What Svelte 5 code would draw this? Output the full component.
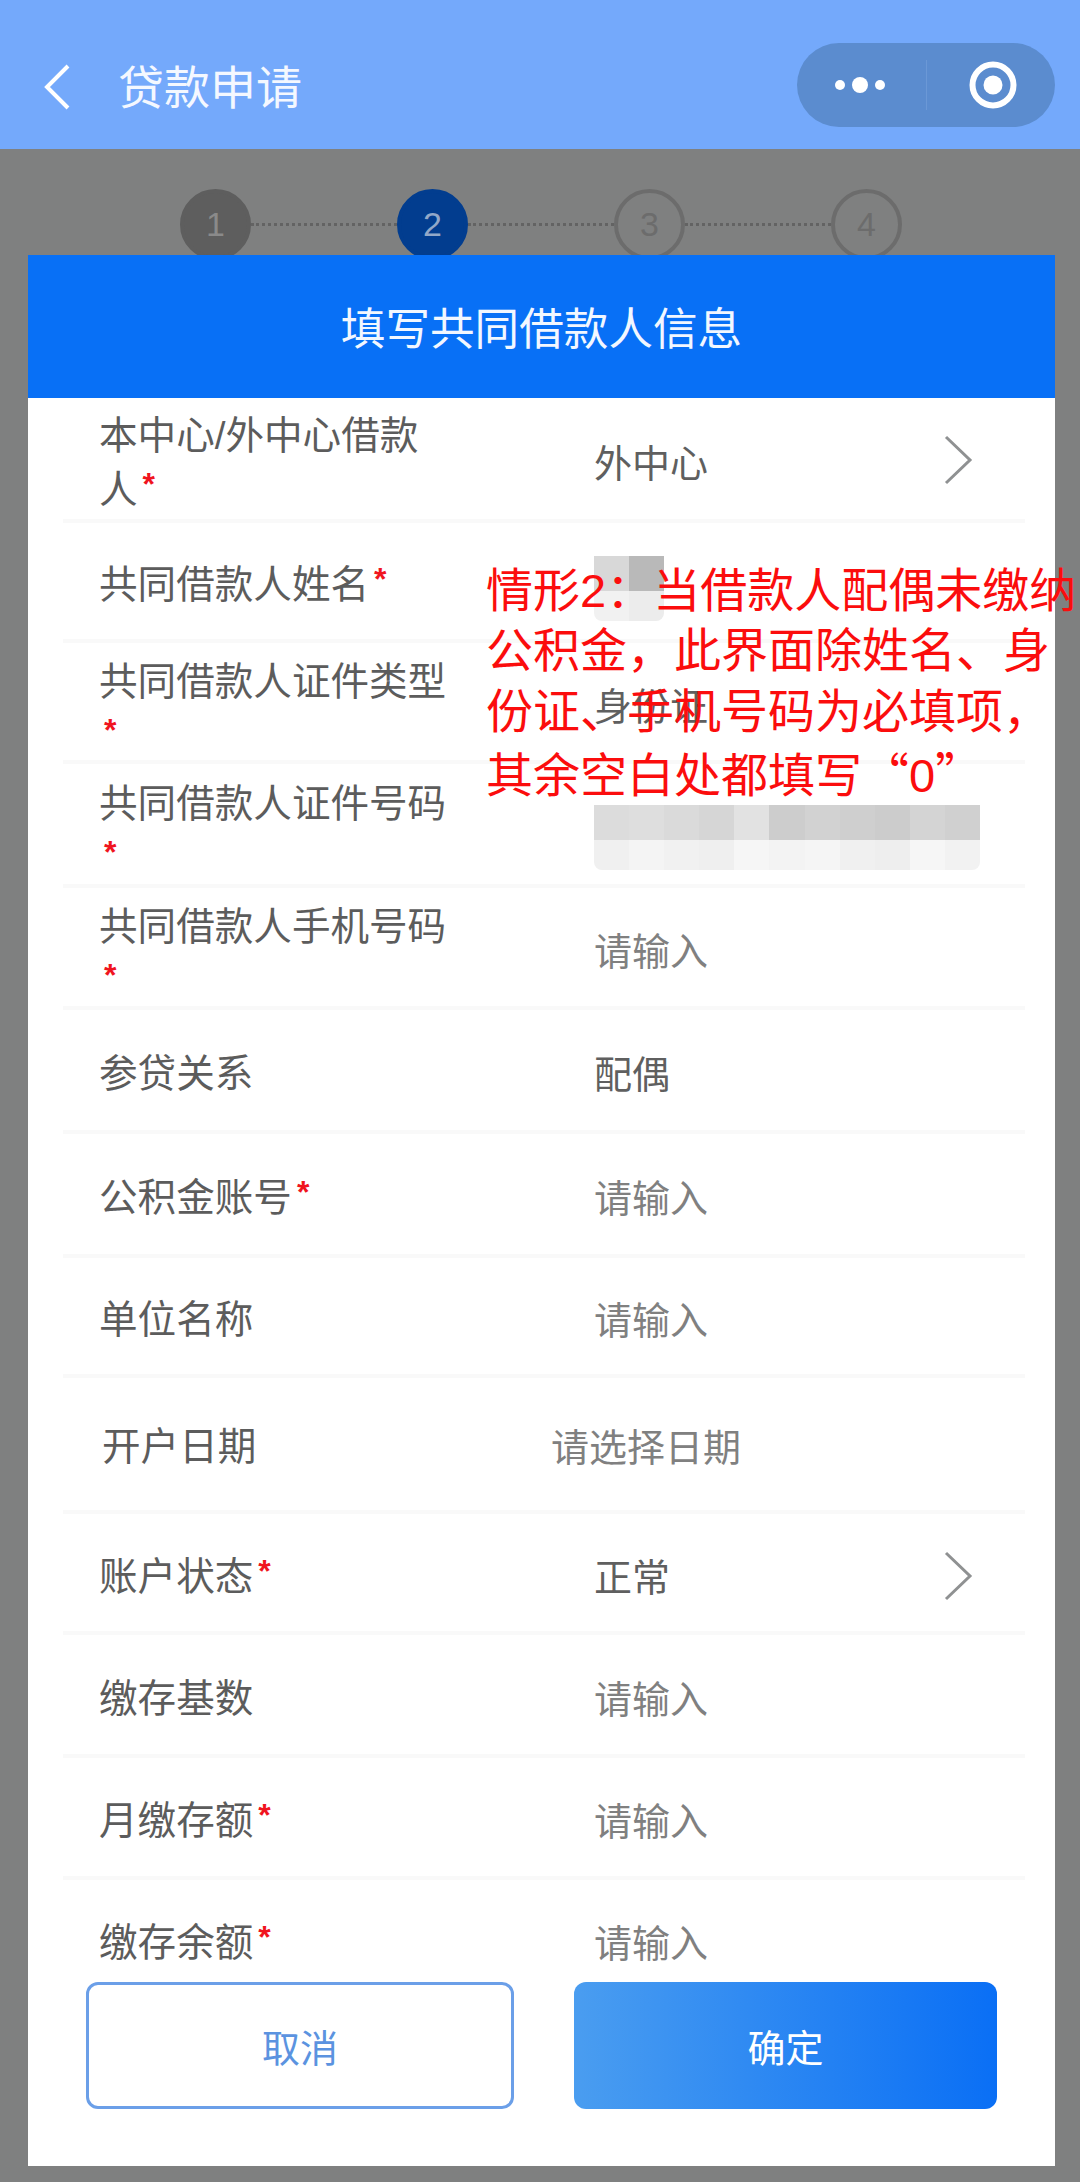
<script>
	const rows = [
		{ label: '本中心/外中心借款人', req: true, value: '外中心', arrow: true, h: 125 },
		{ label: '共同借款人姓名', req: true, value: '', mosaic: 'name', h: 120 },
		{ label: '共同借款人证件类型', req: true, value: '身份证', low: true, h: 121 },
		{ label: '共同借款人证件号码', req: true, value: '', mosaic: 'id', low: true, h: 124 },
		{ label: '共同借款人手机号码', req: true, hint: '请输入', low: true, h: 122 },
		{ label: '参贷关系', value: '配偶', h: 124 },
		{ label: '公积金账号', req: true, hint: '请输入', h: 124 },
		{ label: '单位名称', hint: '请输入', h: 120 },
		{ label: '开户日期', hint: '请选择日期', date: true, h: 136 },
		{ label: '账户状态', req: true, value: '正常', arrow: true, h: 121 },
		{ label: '缴存基数', hint: '请输入', h: 123 },
		{ label: '月缴存额', req: true, hint: '请输入', h: 122 },
		{ label: '缴存余额', req: true, hint: '请输入', h: 122 }
	];

	const steps = [1, 2, 3, 4];

	const mosaics = {
		name: {
			top: ['#d8d8d8', '#b9b9b9'],
			bottom: ['#f1f1f1', '#ececec']
		},
		id: {
			top: ['#dcdcdc', '#dedede', '#dadada', '#d6d6d6', '#e2e2e2', '#cdcdcd', '#d2d2d2', '#cfcfcf', '#cccccc', '#d4d4d4', '#d0d0d0'],
			bottom: ['#f0f0f0', '#f4f4f4', '#f1f1f1', '#efefef', '#f6f6f6', '#f3f3f3', '#f5f5f5', '#f0f0f0', '#eeeeee', '#f6f6f6', '#f2f2f2']
		}
	};
</script>

<div class="page">
	<header class="nav">
		<svg class="back" width="28" height="48" viewBox="0 0 28 48">
			<path d="M25 3 L4 24 L25 45" fill="none" stroke="#fff" stroke-width="4" />
		</svg>
		<span class="nav-title">贷款申请</span>
		<div class="capsule">
			<div class="dots">
				<i class="dot"></i>
				<i class="dot big"></i>
				<i class="dot"></i>
			</div>
			<span class="capsule-line"></span>
			<svg class="target" width="50" height="50" viewBox="0 0 50 50">
				<circle cx="25" cy="25" r="20.5" fill="none" stroke="#fff" stroke-width="6" />
				<circle cx="25" cy="25" r="9.5" fill="#fff" />
			</svg>
		</div>
	</header>

	<div class="steps">
		{#each steps as n, i}
			{#if i > 0}
				<span class="step-line"></span>
			{/if}
			<span class="step" class:done={n === 1} class:active={n === 2}>{n}</span>
		{/each}
	</div>

	<section class="modal">
		<h2 class="modal-title">填写共同借款人信息</h2>

		<div class="list">
			{#each rows as row}
				<div class="row" class:date={row.date} class:low={row.low} style="height: {row.h}px">
					<div class="label">
						{row.label}{#if row.req}<span class="req">*</span>{/if}
					</div>
					<div class="field">
						{#if row.mosaic}
							<div class="mosaic {row.mosaic}">
								<div class="mosaic-row">
									{#each mosaics[row.mosaic].top as c}
										<span style="background: {c}"></span>
									{/each}
								</div>
								<div class="mosaic-row bottom">
									{#each mosaics[row.mosaic].bottom as c}
										<span style="background: {c}"></span>
									{/each}
								</div>
							</div>
						{:else if row.hint}
							<span class="hint">{row.hint}</span>
						{:else}
							<span class="value">{row.value}</span>
						{/if}
					</div>
					{#if row.arrow}
						<svg class="arrow" width="30" height="50" viewBox="0 0 30 50">
							<path d="M3 2 L27 25 L3 48" fill="none" stroke="#8f9192" stroke-width="3" />
						</svg>
					{/if}
				</div>
			{/each}
		</div>

		<div class="actions">
			<button class="btn cancel">取消</button>
			<button class="btn ok">确定</button>
		</div>
	</section>

	<p class="note">
		情形2：当借款人配偶未缴纳<br />
		公积金，此界面除姓名、身<br />
		份证、手机号码为必填项，<br />
		其余空白处都填写<span class="quote">“</span>0<span class="quote">”</span>
	</p>
</div>

<style>
	:global(body) {
		margin: 0;
		background: #7f8080;
	}

	.page {
		position: relative;
		width: 1080px;
		height: 2182px;
		overflow: hidden;
		background: #7f8080;
		font-family: "Liberation Sans", "Noto Sans CJK SC", sans-serif;
	}

	.nav {
		display: flex;
		align-items: center;
		height: 149px;
		padding: 0 25px 0 43px;
		box-sizing: border-box;
		background: #74a9fb;
		color: #fff;
	}

	.back {
		margin-top: 24px;
		flex: none;
	}

	.nav-title {
		margin: 26px 0 0 47px;
		font-size: 46px;
		line-height: 60px;
		color: #f4f8ff;
	}

	.capsule {
		display: flex;
		align-items: center;
		width: 258px;
		height: 84px;
		margin: 21px 0 0 auto;
		border-radius: 42px;
		background: #5b8ccf;
	}

	.dots {
		display: flex;
		align-items: center;
		gap: 7px;
		margin-left: 38px;
	}

	.dot {
		width: 10px;
		height: 10px;
		border-radius: 50%;
		background: #fff;
	}

	.dot.big {
		width: 16px;
		height: 16px;
	}

	.capsule-line {
		width: 1px;
		height: 50px;
		margin-left: 41px;
		background: #6b98d6;
	}

	.target {
		margin-left: 41px;
	}

	.steps {
		display: flex;
		align-items: center;
		padding: 40px 0 0 180px;
	}

	.step {
		display: flex;
		align-items: center;
		justify-content: center;
		flex: none;
		box-sizing: border-box;
		width: 71px;
		height: 71px;
		border: 4px solid #6c6c6c;
		border-radius: 50%;
		font-size: 34px;
		color: #6c6c6c;
	}

	.step.done {
		border-color: #5e5e5e;
		background: #5e5e5e;
		color: #8a8a8a;
	}

	.step.active {
		border-color: #023d8f;
		background: #023d8f;
		color: #92a8c8;
	}

	.step-line {
		flex: none;
		width: 146px;
		border-top: 3px dotted #636363;
	}

	.modal {
		position: absolute;
		left: 28px;
		top: 255px;
		display: flex;
		flex-direction: column;
		width: 1027px;
		height: 1911px;
		background: #fff;
	}

	.modal-title {
		flex: none;
		margin: 0;
		height: 143px;
		background: #0870f6;
		font-size: 44.6px;
		font-weight: 400;
		line-height: 149px;
		text-align: center;
		color: #f2f7ff;
	}

	.list {
		flex: 1;
		min-height: 0;
		overflow: hidden;
		padding: 0 30px 0 35px;
	}

	.row {
		position: relative;
		display: flex;
		align-items: center;
		box-sizing: border-box;
		padding-left: 36px;
		border-bottom: 4px solid #f9f9f9;
	}

	.label {
		flex: none;
		width: 352px;
		margin-top: 8px;
		font-size: 38.6px;
		line-height: 54px;
		color: #5c5c5c;
	}

	.row.low .label {
		margin-top: 14px;
	}

	.req {
		position: relative;
		top: -8px;
		margin-left: 5px;
		font-size: 32px;
		font-weight: 700;
		line-height: 1;
		color: #f0141e;
	}

	.field {
		flex: 1;
		margin: 10px 0 0 143px;
		font-size: 38px;
		line-height: 56px;
	}

	.value {
		color: #5f5f5f;
	}

	.hint {
		color: #808080;
	}

	.row.date .label {
		margin-left: 3px;
		margin-top: 6px;
	}

	.row.date .field {
		margin: 7px 0 0 97px;
	}

	.arrow {
		position: absolute;
		left: 880px;
		top: 37px;
	}

	.mosaic {
		margin-top: 4px;
	}

	.mosaic.name {
		width: 70px;
	}

	.mosaic.id {
		width: 386px;
		margin-top: 16px;
	}

	.mosaic-row {
		display: flex;
		height: 35px;
	}

	.mosaic-row.bottom {
		height: 30px;
		border-radius: 0 0 8px 8px;
		overflow: hidden;
	}

	.mosaic-row span {
		flex: 1;
	}

	.actions {
		flex: none;
		display: flex;
		gap: 60px;
		height: 127px;
		padding: 0 58px 57px;
	}

	.btn {
		box-sizing: border-box;
		height: 127px;
		border-radius: 12px;
		font-family: inherit;
		font-size: 38px;
	}

	.btn.cancel {
		width: 428px;
		border: 3px solid #6b9fe8;
		background: #fff;
		color: #5b93e0;
	}

	.btn.ok {
		width: 423px;
		border: 0;
		background: linear-gradient(90deg, #4a9df0, #0a6ff5);
		color: #fff;
	}

	.note {
		position: absolute;
		left: 486px;
		top: 561px;
		margin: 0;
		font-size: 47px;
		line-height: 60.4px;
		white-space: nowrap;
		color: #fb0d0d;
	}

	.quote {
		font-family: "Noto Sans CJK SC", sans-serif;
	}
</style>
